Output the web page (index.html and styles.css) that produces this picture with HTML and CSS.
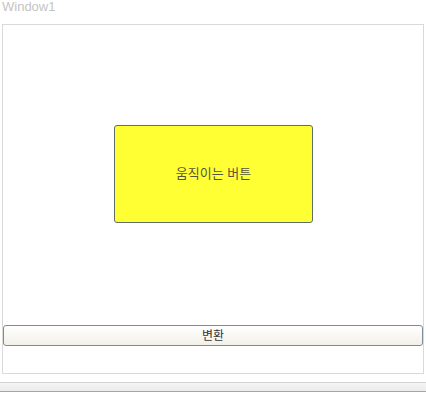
FILE: index.html
```html
<!DOCTYPE html>
<html lang="ko">
<head>
    <meta charset="UTF-8">
    <meta name="viewport" content="width=device-width, initial-scale=1.0">
    <title>Window1</title>
    <link rel="stylesheet" href="styles.css">
</head>
<body>
    <div class="title">Window1</div>

    <div class="panel">
        <div class="canvas">
            <button class="moving-btn" id="movingBtn">움직이는 버튼</button>
        </div>
        <button class="toggle-btn" id="toggleBtn">변환</button>
    </div>

    <div class="statusbar"></div>
</body>
</html>
```

FILE: styles.css
```css
* {
    box-sizing: border-box;
    font-family: "Noto Sans CJK KR", "Liberation Sans", sans-serif;
}

body {
    margin: 0;
    background-color: #ffffff;
    overflow: hidden;
}

.title {
    height: 24px;
    padding-left: 2px;
    font-family: "Liberation Sans", Arial, sans-serif;
    font-size: 13px;
    line-height: 13px;
    color: #c4c4c4;
}

.panel {
    width: 422px;
    height: 350px;
    margin-left: 2px;
    border: 1px solid #d9d9d9;
}

.canvas {
    position: relative;
    height: 300px;
}

.moving-btn {
    position: absolute;
    left: 111px;
    top: 100px;
    width: 199px;
    height: 98px;
    padding: 0 0 4px 0;
    background-color: #ffff33;
    border: 1px solid #5f6f63;
    border-radius: 3px;
    font-size: 13px;
    color: #55553f;
}

.toggle-btn {
    display: block;
    width: 420px;
    height: 21px;
    padding: 0 0 2px 0;
    border: 1px solid #7d8c99;
    border-radius: 3px;
    background: linear-gradient(#ffffff, #f3f0e8);
    font-size: 12px;
    color: #333333;
}

.statusbar {
    height: 10px;
    margin-top: 8px;
    border-top: 1px solid #d4d4d4;
    border-bottom: 1px solid #a8a898;
    background: linear-gradient(#f4f4f4, #ececec);
}
```
